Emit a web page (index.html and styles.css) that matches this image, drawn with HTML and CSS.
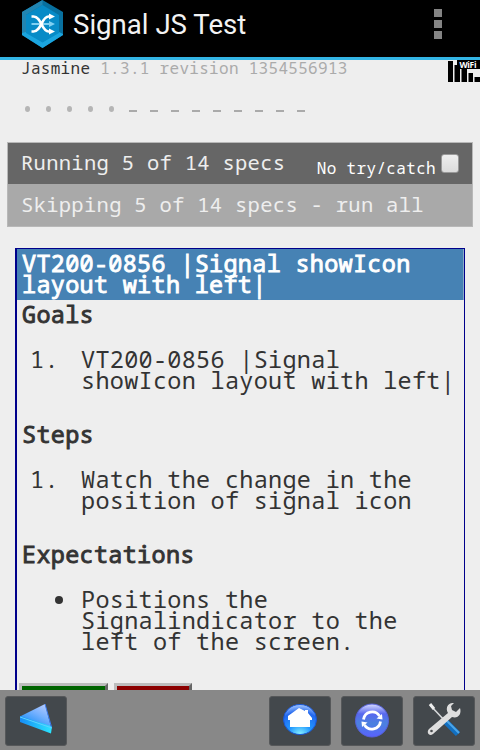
FILE: index.html
```html
<!DOCTYPE html>
<html lang="en">
<head>
<meta charset="utf-8">
<title>Signal JS Test</title>
<link rel="stylesheet" href="styles.css">
</head>
<body>
<header class="app-bar">
  <svg class="logo" width="44" height="48" viewBox="0 0 44 48">
    <path fill="#08709f" d="M21.5 0 42 12v23L21.5 48 1 35V12z"/>
    <path fill="#2185b2" d="M21.5 0 1 12v23l4-2V15L21.5 5z"/>
    <path fill="#1ba5df" d="M1 33l4-1 16.500 10L38 32l4 2v1L21.500 48 1 35z"/>
    <path fill="#078bc7" d="M21.500 5 38 15v18l-16.500 9.500L5 33V15z"/>
    <path stroke="#7fd0f2" stroke-width="2" fill="none" d="M10.500 24H29"/>
    <path fill="#7fd0f2" d="m28 21 6 3-6 3z"/>
    <path stroke="#fff" stroke-width="2.600" fill="none" d="M10.500 16.500h2c8 0 8 15 15 15h2M10.500 31.500h2c8 0 8-15 15-15h2"/>
    <path fill="#fff" d="m28 13.500 6 3-6 3zM28 28.500l6 3-6 3z"/>
  </svg>
  <h1 class="app-title">Signal JS Test</h1>
  <div class="menu"><i></i><i></i><i></i></div>
</header>
<main class="page">
  <svg class="signal" width="32" height="22" viewBox="0 0 32 22">
    <path fill="#777" d="M6 5h1v17H6zM13 8h1v14h-1zM20 13h1v9h-1zM26 17h1v5h-1z"/>
    <path d="M0 1h5v21H0zM7 5h5v17H7zM14 8h5v14h-5zM21 13h4v9h-4zM27 17h5v5h-5zM9 0h23v9H9z"/>
    <text class="wifi" x="11.500" y="7.500" textLength="17">WiFi</text>
  </svg>
  <div class="banner">Jasmine <span class="version">1.3.1 revision 1354556913</span></div>
  <div class="symbols">
    <i class="dot"></i><i class="dot"></i><i class="dot"></i><i class="dot"></i><i class="dot"></i><i class="dash"></i><i class="dash"></i><i class="dash"></i><i class="dash"></i><i class="dash"></i><i class="dash"></i><i class="dash"></i><i class="dash"></i><i class="dash"></i>
  </div>
  <div class="alert">
    <div class="bar running"><span>Running 5 of 14 specs</span><label class="catch">No try/catch<i class="check"></i></label></div>
    <div class="bar skipping">Skipping 5 of 14 specs - run all</div>
  </div>
  <section class="spec">
    <h2 class="spec-title">VT200-0856 |Signal showIcon<br>layout with left|</h2>
    <h3>Goals</h3>
    <div class="item"><span class="marker">1.</span><p>VT200-0856 |Signal<br>showIcon layout with left|</p></div>
    <h3>Steps</h3>
    <div class="item"><span class="marker">1.</span><p>Watch the change in the<br>position of signal icon</p></div>
    <h3>Expectations</h3>
    <div class="item"><span class="marker"><i class="bullet"></i></span><p>Positions the<br>Signalindicator to the<br>left of the screen.</p></div>
    <div class="verdict"><button class="pass"></button><button class="fail"></button></div>
  </section>
</main>
<nav class="toolbar">
  <button class="tool back">
    <svg width="60" height="48" viewBox="0 0 60 48">
      <defs>
        <linearGradient id="face" x1="1" y1="0" x2="0.300" y2="1"><stop stop-color="#c5d0ff"/><stop offset=".5" stop-color="#73b0ff"/><stop offset="1" stop-color="#138cf5"/></linearGradient>
        <linearGradient id="edge"><stop stop-color="#178cf5"/><stop offset="1" stop-color="#2be6ff"/></linearGradient>
      </defs>
      <path fill="url(#face)" d="M39 7 14 19.500 45 30z"/>
      <path fill="url(#edge)" d="M14 19v6l31 11.500 1-7z"/>
      <path stroke="#62d0ff" fill="none" d="m14 20 32 11"/>
      <path stroke="#3a7cf0" fill="none" d="m39 7 6.500 23"/>
    </svg>
  </button>
  <button class="tool">
    <svg width="60" height="48" viewBox="0 0 60 48">
      <defs><radialGradient id="home" cx=".5" cy="1" r="1"><stop stop-color="#8df6ff"/><stop offset=".35" stop-color="#2299ff"/><stop offset=".75" stop-color="#2268ef"/><stop offset="1" stop-color="#a9caff"/></radialGradient></defs>
      <ellipse cx="30" cy="22.500" rx="16.500" ry="15" fill="url(#home)" stroke="#1757d8"/>
      <path fill="#fff" d="m29 11 6 3v-1h3v3l4 5v2h-2v7H20v-7h-2v-4z"/>
    </svg>
  </button>
  <button class="tool">
    <svg width="60" height="48" viewBox="0 0 60 48">
      <defs><linearGradient id="sync" x2="0" y2="1"><stop stop-color="#d9dcff"/><stop offset=".3" stop-color="#5868ef"/><stop offset=".6" stop-color="#4b82df"/><stop offset="1" stop-color="#5960ff"/></linearGradient></defs>
      <circle cx="30" cy="23.500" r="16.500" fill="url(#sync)" stroke="#5560db"/>
      <path stroke="#fff" stroke-width="2.800" fill="none" d="M21.500 22.500a8.700 8.700 0 0 1 16-3.500M38.500 24.500a8.700 8.700 0 0 1-16 3.500"/>
      <path fill="#fff" d="m40 17 .5 5.500-6-1zM20 30l-.5-5.500 6 1z"/>
    </svg>
  </button>
  <button class="tool">
    <svg width="60" height="48" viewBox="0 0 60 48">
      <path stroke="#d8dbdc" stroke-width="1.600" d="m16 8 16 17"/>
      <path stroke="#eee" stroke-width="3" d="m16 7 4 5"/>
      <path stroke="#126fc0" stroke-width="6" d="m31 24 13 13"/>
      <path stroke="#4ca5e8" stroke-width="2" d="m32 23 13 13"/>
      <path fill="#dedede" d="M40 6c-6-1-9 5-6 10L15 32c-3 3 0 8 4 5l19-17c6 2 10-3 8-9l-4 4-4-2-1-4z"/>
      <circle cx="17.500" cy="34" r="1.300" fill="#4a4d50"/>
    </svg>
  </button>
</nav>
</body>
</html>
```
FILE: styles.css
```css
* { box-sizing: border-box; }
body {
  margin: 0;
  height: 750px;
  display: flex;
  flex-direction: column;
  overflow: hidden;
  background: #eee;
  color: #333;
  font-family: "Droid Sans Mono", "Noto Sans Mono", "DejaVu Sans Mono", monospace;
}
h1, h2, h3, p { margin: 0; }
i { display: block; }
.app-bar {
  height: 60px;
  flex: none;
  display: flex;
  align-items: flex-start;
  padding-left: 21px;
  background: #000;
  border-bottom: 3px solid #33b5e5;
}
.app-title {
  margin-left: 8px;
  flex: 1;
  font: 400 27.6px/50px Roboto, sans-serif;
  color: #f3f3f3;
}
.menu { display: grid; gap: 3px; margin: 9px 38px 0 0; }
.menu i { width: 8px; height: 8px; background: #848484; }
.page {
  position: relative;
  height: 630px;
  flex: none;
  overflow: hidden;
  padding: 0 7px;
}
.signal { position: absolute; right: 0; top: 0; }
.wifi { font: bold 8.5px "Open Sans", sans-serif; fill: #fff; }
.banner {
  padding-left: 14px;
  height: 39px;
  font-size: 16px;
  letter-spacing: .3px;
  line-height: 17px;
  white-space: pre;
}
.version { color: #aaa; }
.symbols { display: flex; height: 43px; padding: 7px 0 0 18px; gap: 13px; }
.symbols i { width: 8px; }
.dot::before { content: ""; display: block; width: 5px; height: 6px; border-radius: 50%; background: #b5b5b5; }
.dash { padding-top: 4px; }
.dash::before { content: ""; display: block; width: 8px; height: 2px; margin-left: -1px; background: #aaa; }
.alert { border: 1px solid #b8b8b8; width: 466px; }
.bar {
  height: 41px;
  display: flex;
  align-items: center;
  justify-content: space-between;
  padding: 0 13px 3px;
  font-size: 20.500px;
  letter-spacing: .29px;
  color: #eee;
  white-space: pre;
}
.running { background: #666; }
.skipping { height: 42px; padding-bottom: 2px; background: #a9a9a9; }
.catch {
  display: flex;
  gap: 5px;
  font-size: 16px;
  letter-spacing: .33px;
  line-height: 20px;
  padding-top: 12px;
  color: #fff;
}
.check {
  width: 18px;
  height: 19px;
  margin-top: -4px;
  border: 1px solid #999;
  border-radius: 3px;
  background: linear-gradient(#eee, #dcdcdc);
}
.spec {
  width: 450px;
  height: 460px;
  margin: 21px 0 0 8px;
  border: 1px solid #00008b;
  border-left-width: 2px;
  font-size: 23.500px;
  letter-spacing: .29px;
  line-height: 21px;
  white-space: nowrap;
}
.spec-title {
  height: 51px;
  padding: 4px 0 0 5px;
  background: #4682b4;
  border-right: 1px solid #8bacc9;
  color: #fff;
  font-size: inherit;
}
.spec h2, .spec h3 { font-weight: 400; -webkit-text-stroke: .9px currentColor; }
.spec h3 { font-size: inherit; margin: 4px 0 24px 5px; }
.spec .item + h3 { margin-top: 0; }
.item { display: grid; grid-template-columns: 64px 1fr; margin-bottom: 33px; }
.marker { padding-left: 13px; }
.bullet { width: 8px; height: 8px; margin: 7px 0 0 25px; border-radius: 50%; background: #333; }
.verdict { display: flex; gap: 6px; padding-left: 2px; margin-top: 31px; }
.item:has(.bullet) { margin-bottom: 31px; }
.verdict button { height: 40px; border: 3px solid; border-color: #bdbdbd #666 #666 #bdbdbd; }
.pass { width: 89px; background: #006400; }
.fail { width: 78px; background: #8b0000; }
.toolbar {
  height: 60px;
  flex: none;
  display: flex;
  gap: 10px;
  padding: 6px 5px;
  background: #888;
}
.tool {
  width: 62px;
  height: 50px;
  padding: 0;
  overflow: hidden;
  border: 1px solid #56585a;
  border-radius: 3px;
  background: #43484c;
}
.back { margin-right: auto; }
```
